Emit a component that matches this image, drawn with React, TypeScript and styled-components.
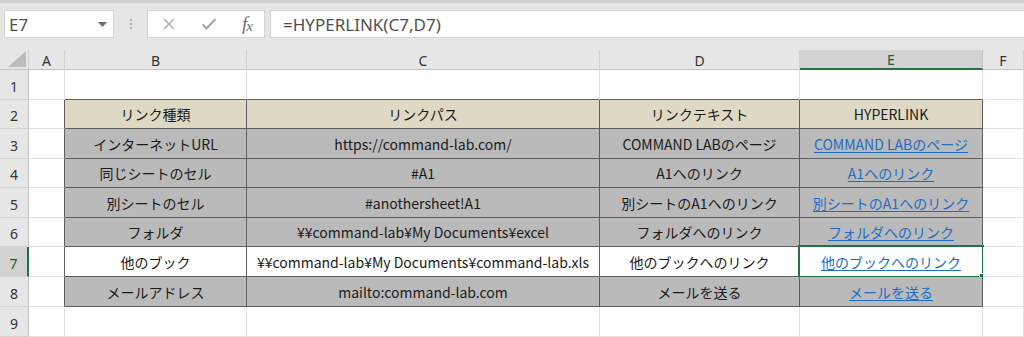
import React from "react";
import styled, { createGlobalStyle } from "styled-components";

const GlobalStyle = createGlobalStyle`
  html, body { margin: 0; padding: 0; background: #ffffff; }
  body { font-family: "Noto Sans", "Liberation Sans", sans-serif; overflow: hidden; }
`;

const COLS = ["A", "B", "C", "D", "E", "F"];
const COL_WIDTHS = "29px 36px 182px 353px 200px 183px 1fr";
const ROW_HEIGHTS = [30, 29, 30, 29, 30, 29, 30, 30, 30];

const GREEN = "#217346";
const GRID = "#e1e1e1";
const EDGE = "#5e5e5e";

type Fill = "none" | "head" | "gray" | "white";

interface RowData {
  fill: Fill;
  cells: string[];
}

// rows 2..8, columns B..E
const data: RowData[] = [
  { fill: "head", cells: ["リンク種類", "リンクパス", "リンクテキスト", "HYPERLINK"] },
  { fill: "gray", cells: ["インターネットURL", "https://command-lab.com/", "COMMAND LABのページ", "COMMAND LABのページ"] },
  { fill: "gray", cells: ["同じシートのセル", "#A1", "A1へのリンク", "A1へのリンク"] },
  { fill: "gray", cells: ["別シートのセル", "#anothersheet!A1", "別シートのA1へのリンク", "別シートのA1へのリンク"] },
  { fill: "gray", cells: ["フォルダ", "¥¥command-lab¥My Documents¥excel", "フォルダへのリンク", "フォルダへのリンク"] },
  { fill: "white", cells: ["他のブック", "¥¥command-lab¥My Documents¥command-lab.xls", "他のブックへのリンク", "他のブックへのリンク"] },
  { fill: "gray", cells: ["メールアドレス", "mailto:command-lab.com", "メールを送る", "メールを送る"] },
];

const fillColor: Record<Fill, string> = {
  none: "#ffffff",
  head: "#ddd9c4",
  gray: "#bababa",
  white: "#ffffff",
};

const inTable = (row: number, col: number) => row >= 2 && row <= 8 && col >= 1 && col <= 4;

const App: React.FC = () => {
  const rows = ROW_HEIGHTS.map((_, i) => i + 1);

  return (
    <>
      <GlobalStyle />
      <Window>
        <TopStrip />
        <FormulaBar>
          <NameBox>
            <NameText>E7</NameText>
            <svg width="9" height="5" viewBox="0 0 9 5">
              <path d="M0 0h9L4.5 5z" fill="#6b6b6b" />
            </svg>
          </NameBox>
          <Grip>
            <span />
            <span />
            <span />
          </Grip>
          <FxBox>
            <svg width="14" height="14" viewBox="0 0 14 14">
              <path d="M2 2l10 10M12 2L2 12" stroke="#a6a6a6" strokeWidth="1.3" fill="none" />
            </svg>
            <svg width="16" height="14" viewBox="0 0 16 14">
              <path d="M1.5 7.5l4 4L14.5 2" stroke="#a6a6a6" strokeWidth="2" fill="none" />
            </svg>
            <FxLabel>
              f<sub>x</sub>
            </FxLabel>
          </FxBox>
          <FormulaInput>=HYPERLINK(C7,D7)</FormulaInput>
        </FormulaBar>

        <Sheet>
          <Corner>
            <svg width="18" height="16" viewBox="0 0 18 16">
              <path d="M18 0v16H0z" fill="#bcbcbc" />
            </svg>
          </Corner>
          {COLS.map((c) => (
            <ColHead key={c} $selected={c === "E"}>
              {c}
            </ColHead>
          ))}

          {rows.map((r) => (
            <React.Fragment key={r}>
              <RowHead $selected={r === 7}>{r}</RowHead>
              {COLS.map((_, c) => {
                const table = inTable(r, c);
                const rowInfo = r >= 2 && r <= 8 ? data[r - 2] : null;
                const text = table && rowInfo ? rowInfo.cells[c - 1] : "";
                const fill: Fill = table && rowInfo ? rowInfo.fill : "none";
                const darkRight = table || inTable(r, c + 1);
                const darkBottom = table || inTable(r + 1, c);
                const isLink = table && c === 4 && r > 2;
                return (
                  <Cell
                    key={c}
                    $fill={fill}
                    $right={darkRight ? EDGE : GRID}
                    $bottom={darkBottom ? EDGE : GRID}
                  >
                    {isLink ? <LinkText>{text}</LinkText> : text}
                    {r === 7 && c === 4 && (
                      <Selection>
                        <FillHandle />
                      </Selection>
                    )}
                  </Cell>
                );
              })}
            </React.Fragment>
          ))}
        </Sheet>
      </Window>
    </>
  );
};

export default App;

const Window = styled.div`
  width: 1024px;
  height: 337px;
  display: flex;
  flex-direction: column;
  background: #e6e6e6;
  overflow: hidden;
`;

const TopStrip = styled.div`
  height: 3px;
  background: #cfcfcf;
`;

const FormulaBar = styled.div`
  height: 28px;
  margin: 7px 0 12px;
  display: flex;
  align-items: stretch;
`;

const NameBox = styled.div`
  width: 110px;
  margin-left: 4px;
  box-sizing: border-box;
  background: #ffffff;
  border: 1px solid #d4d4d4;
  display: flex;
  align-items: center;
  justify-content: space-between;
  padding: 0 6px 0 4px;
`;

const NameText = styled.span`
  font-family: "Noto Sans", sans-serif;
  font-size: 17px;
  color: #505050;
`;

const Grip = styled.div`
  width: 33px;
  display: flex;
  flex-direction: column;
  align-items: center;
  justify-content: center;
  gap: 2px;

  span {
    width: 2px;
    height: 2px;
    background: #b0a890;
    display: block;
  }
`;

const FxBox = styled.div`
  width: 118px;
  box-sizing: border-box;
  background: #ffffff;
  border: 1px solid #d4d4d4;
  display: flex;
  align-items: center;
  justify-content: space-between;
  padding: 0 12px 0 14px;
`;

const FxLabel = styled.span`
  font-family: "Liberation Serif", serif;
  font-style: italic;
  font-size: 19px;
  color: #6e6e6e;
  letter-spacing: -1px;

  sub {
    font-size: 15px;
    vertical-align: -1px;
  }
`;

const FormulaInput = styled.div`
  flex: 1;
  margin-left: 5px;
  background: #ffffff;
  border: 1px solid #d4d4d4;
  border-right: none;
  display: flex;
  align-items: center;
  padding-left: 12px;
  font-family: "Noto Sans", sans-serif;
  font-size: 17px;
  color: #505050;
`;

const Sheet = styled.div`
  flex: 1;
  display: grid;
  grid-template-columns: ${COL_WIDTHS};
  grid-template-rows: 20px ${ROW_HEIGHTS.map((h) => `${h}px`).join(" ")};
  background: #ffffff;
  font-family: "Noto Sans CJK JP", "Noto Sans", sans-serif;
`;

const Corner = styled.div`
  background: #e6e6e6;
  border-right: 1px solid #d0d0d0;
  border-bottom: 1px solid #c4c4c4;
  display: flex;
  align-items: flex-end;
  justify-content: flex-end;
  padding: 0 2px 2px 0;
  box-sizing: border-box;
`;

const ColHead = styled.div<{ $selected: boolean }>`
  box-sizing: border-box;
  background: ${(p) => (p.$selected ? "#d2d2d2" : "#e6e6e6")};
  border-right: 1px solid ${(p) => (p.$selected ? "#c0c0c0" : "#d0d0d0")};
  border-bottom: ${(p) => (p.$selected ? `2px solid ${GREEN}` : "1px solid #c4c4c4")};
  display: flex;
  align-items: center;
  justify-content: center;
  font-family: "Noto Sans", sans-serif;
  font-size: 14px;
  color: ${(p) => (p.$selected ? "#1e5b3a" : "#333333")};
  padding-top: 1px;
`;

const RowHead = styled.div<{ $selected: boolean }>`
  box-sizing: border-box;
  background: ${(p) => (p.$selected ? "#d2d2d2" : "#e6e6e6")};
  border-right: ${(p) => (p.$selected ? `2px solid ${GREEN}` : "1px solid #c4c4c4")};
  border-bottom: 1px solid #d4d4d4;
  display: flex;
  align-items: flex-end;
  justify-content: center;
  padding-bottom: 3px;
  font-family: "Noto Sans", sans-serif;
  font-size: 14px;
  line-height: 18px;
  color: ${(p) => (p.$selected ? "#1e5b3a" : "#333333")};
`;

const Cell = styled.div<{ $fill: Fill; $right: string; $bottom: string }>`
  position: relative;
  box-sizing: border-box;
  background: ${(p) => fillColor[p.$fill]};
  border-right: 1px solid ${(p) => p.$right};
  border-bottom: 1px solid ${(p) => p.$bottom};
  display: flex;
  align-items: center;
  justify-content: center;
  font-size: 14px;
  color: #1a1a1a;
  white-space: nowrap;
`;

const LinkText = styled.span`
  color: #1f6cc4;
  text-decoration: underline;
  text-underline-offset: 2px;
`;

const Selection = styled.div`
  position: absolute;
  top: -2px;
  left: -2px;
  right: -2px;
  bottom: -2px;
  border: 2px solid ${GREEN};
  pointer-events: none;
`;

const FillHandle = styled.div`
  position: absolute;
  right: -4px;
  bottom: -4px;
  width: 5px;
  height: 5px;
  background: ${GREEN};
  border: 1px solid #ffffff;
`;
